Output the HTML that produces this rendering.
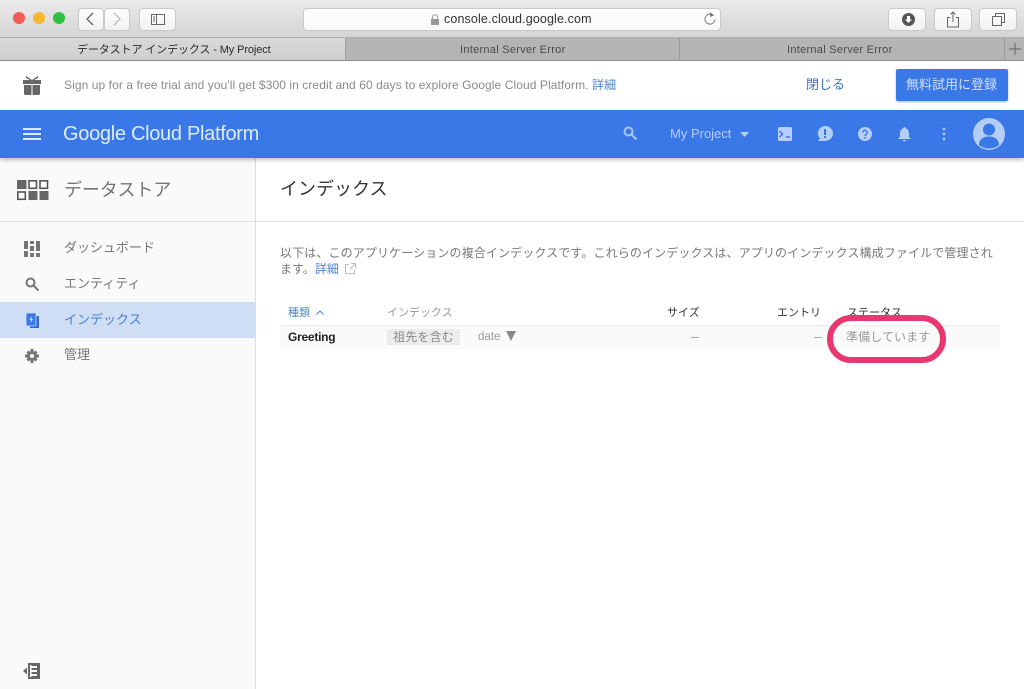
<!DOCTYPE html>
<html lang="ja"><head><meta charset="utf-8"><style>
html,body{margin:0;padding:0;width:1024px;height:689px;overflow:hidden;background:#fff}
body{position:relative;font-family:"Liberation Sans","Noto Sans CJK JP",sans-serif;font-size:12px;color:#666}
.a{position:absolute}
.t{position:absolute;white-space:nowrap;line-height:16px}
svg{position:absolute;overflow:visible}
.btn{position:absolute;background:linear-gradient(#fdfdfd,#f1f1f1);border:1px solid #c9c9c9;border-radius:4px;box-sizing:border-box;height:23px;top:8px}
</style></head><body>
<div class="a" style="left:0;top:0;width:1024px;height:38px;background:linear-gradient(#ebebeb,#d4d4d4);border-bottom:1px solid #b0b0b0;box-sizing:border-box"></div>
<div class="a" style="left:13px;top:12px;width:12px;height:12px;border-radius:50%;background:#f25a52"></div>
<div class="a" style="left:33px;top:12px;width:12px;height:12px;border-radius:50%;background:#f6b82e"></div>
<div class="a" style="left:53px;top:12px;width:12px;height:12px;border-radius:50%;background:#2fc03f"></div>
<div class="btn" style="left:78px;width:26px"></div>
<div class="btn" style="left:104px;width:26px"></div>
<svg style="left:0;top:0" width="200" height="38" fill="none"><path d="M93 13l-6 6 6 6" stroke="#666" stroke-width="1.3"/><path d="M114 13l6 6-6 6" stroke="#bbb" stroke-width="1.3"/></svg>
<div class="btn" style="left:139px;width:37px"></div>
<svg style="left:151px;top:14px" width="14" height="11" fill="none"><rect x=".5" y=".5" width="13" height="10" stroke="#666"/><path d="M5.500 0v11M2 3h2M2 5h2M2 7h2" stroke="#666"/></svg>
<div class="btn" style="left:303px;width:418px;background:linear-gradient(#fff,#f8f8f8)"></div>
<svg style="left:430px;top:14px" width="10" height="11"><path d="M2.500 5V3.200a2.500 2.500 0 0 1 5 0V5" fill="none" stroke="#999"/><rect x="1" y="5" width="8" height="6" fill="#999"/></svg>
<div class="t" style="left:444px;top:11px;font-size:12.500px;color:#333;letter-spacing:.13px">console.cloud.google.com</div>
<svg style="left:703px;top:12px" width="14" height="15" fill="none"><path d="M10.500 3.500a5 5 0 1 0 1.500 4" stroke="#777" stroke-width="1"/><path d="M7 0l4 3.500-4 1.500z" fill="#777"/></svg>
<div class="btn" style="left:888px;width:38px"></div>
<div class="btn" style="left:934px;width:38px"></div>
<div class="btn" style="left:979px;width:38px"></div>
<svg style="left:902px;top:13px" width="13" height="13"><circle cx="6.500" cy="6.500" r="6.500" fill="#555"/><path d="M5 3h3v3.500h2L6.500 10 3 6.500h2z" fill="#fff"/></svg>
<svg style="left:946px;top:11px" width="14" height="17" fill="none" stroke="#666"><path d="M4 6.500H1.500v9.500h11V6.500H10M7 11V1M4.500 3.500L7 1l2.500 2.500"/></svg>
<svg style="left:992px;top:13px" width="13" height="13" fill="none" stroke="#666"><rect x=".5" y="3.500" width="9" height="9"/><path d="M3.500 3.500V.5h9v9H9.500"/></svg>

<div class="a" style="left:0;top:38px;width:1024px;height:23px;background:#b4b4b4;border-bottom:1px solid #8f8f8f;box-sizing:border-box"></div>
<div class="a" style="left:0;top:38px;width:346px;height:22px;background:linear-gradient(#d9d9d9,#cfcfcf);border-right:1px solid #a0a0a0;box-sizing:border-box"></div>
<div class="a" style="left:679px;top:38px;width:1px;height:22px;background:#9c9c9c"></div>
<div class="a" style="left:1004px;top:38px;width:1px;height:22px;background:#9c9c9c"></div>
<div class="t" style="left:77px;top:42px;font-size:11px;color:#2a2a2a;letter-spacing:-.11px">データストア インデックス - My Project</div>
<div class="t" style="left:460px;top:42px;font-size:11px;color:#4a4a4a;letter-spacing:.28px">Internal Server Error</div>
<div class="t" style="left:787px;top:42px;font-size:11px;color:#4a4a4a;letter-spacing:.28px">Internal Server Error</div>
<svg style="left:1009px;top:43px" width="12" height="12" fill="none" stroke="#666"><path d="M6 0v12M0 6h12"/></svg>

<svg style="left:23px;top:76px" width="18" height="20" fill="#666"><path d="M0 4h18v4H0zM1 9h7.500v10H2.500Q1 19 1 17.500zM9.500 9H17v8.500Q17 19 15.500 19H9.500z"/><path d="M3 0l6 4 6-4v2l-4 2H7L3 2z"/></svg>
<div class="t" style="left:64px;top:77px;color:#8a8a8a;font-size:12px;letter-spacing:.08px">Sign up for a free trial and you'll get $300 in credit and 60 days to explore Google Cloud Platform. <span style="color:#4d86c9">詳細</span></div>
<div class="t" style="left:806px;top:77px;font-size:13px;color:#3f74bd">閉じる</div>
<div class="a" style="left:896px;top:69px;width:112px;height:32px;background:#3b78e7;border-radius:2px;box-shadow:0 1px 2px rgba(0,0,0,.3)"></div>
<div class="t" style="left:906px;top:77px;font-size:13px;color:#d3e2fb">無料試用に登録</div>

<div class="a" style="left:0;top:158px;width:256px;height:531px;background:#fafafa;border-right:1px solid #dcdcdc;box-sizing:border-box"></div>
<div class="a" style="left:0;top:221px;width:1024px;height:1px;background:#dedede"></div>
<div class="a" style="left:0;top:302px;width:255px;height:36px;background:#d0def5"></div>
<div class="a" style="left:0;top:110px;width:1024px;height:48px;background:#3b78e7;box-shadow:0 2px 4px rgba(0,0,0,.25)"></div>
<svg style="left:23px;top:128px" width="18" height="12" fill="#dceafd"><path d="M0 0h18v2H0zM0 5h18v2H0zM0 10h18v2H0z"/></svg>
<div class="t" style="left:63px;top:122px;font-size:20px;line-height:24px;color:#dcecfd;letter-spacing:-.3px">Google Cloud Platform</div>
<svg style="left:623px;top:126px" width="15" height="15" fill="none" stroke="#a9c6f5" stroke-width="2"><circle cx="5.500" cy="5.500" r="4"/><path d="M8.500 8.500l5 5"/></svg>
<div class="t" style="left:670px;top:126px;font-size:13px;color:#b4cef7">My Project</div>
<svg style="left:740px;top:132px" width="10" height="5" fill="#b4cef7"><path d="M0 0h9L4.500 5z"/></svg>
<svg style="left:778px;top:127px" width="14" height="14"><rect width="14" height="14" rx="1.500" fill="#b4cef7"/><path d="M1.500 4l3 3-3 3M8 10h4" fill="none" stroke="#3b78e7" stroke-width="1.500"/></svg>
<svg style="left:817px;top:126px" width="16" height="16"><path d="M8 0a8 7.500 0 0 1 0 15H1l2-2.500A8 7.500 0 0 1 8 0z" fill="#b4cef7"/><path d="M7 3h2v6H7zM7 10h2v2H7z" fill="#3b78e7"/></svg>
<svg style="left:858px;top:127px" width="14" height="14"><circle cx="7" cy="7" r="7" fill="#b4cef7"/><path d="M4.800 5.500a2.200 2.200 0 1 1 3.500 1.800C7.500 7.900 7 8.200 7 9" fill="none" stroke="#3b78e7" stroke-width="1.400"/><rect x="6.200" y="10" width="1.600" height="1.600" fill="#3b78e7"/></svg>
<svg style="left:898px;top:127px" width="13" height="15" fill="#b4cef7"><path d="M6.500 0a1 1 0 0 1 1 1.200C10 1.800 11 4 11 6.500V10l2 2H0l2-2V6.500C2 4 3 1.800 5.500 1.200a1 1 0 0 1 1-1.200zM5 13h3a1.500 1.500 0 0 1-3 0z"/></svg>
<svg style="left:942px;top:127px" width="4" height="14" fill="#a9c6f5"><circle cx="2" cy="2" r="1.400"/><circle cx="2" cy="7" r="1.400"/><circle cx="2" cy="12" r="1.400"/></svg>
<svg style="left:973px;top:118px" width="32" height="32"><circle cx="16" cy="16" r="16" fill="#b4cef7"/><circle cx="16" cy="11.500" r="6" fill="#3b78e7"/><path d="M6 27c0-6 5-8.500 10-8.500s10 2.500 10 8.500a16 16 0 0 1-20 0z" fill="#3b78e7"/></svg>

<svg style="left:17px;top:180px" width="31" height="20"><rect width="9.500" height="9" fill="#666"/><rect x="12" y=".8" width="7.500" height="7.500" fill="#fff" stroke="#555" stroke-width="1.600"/><rect x="23" y=".8" width="7.500" height="7.500" fill="#fff" stroke="#555" stroke-width="1.600"/><rect x=".8" y="12" width="7.500" height="7.300" fill="#fff" stroke="#555" stroke-width="1.600"/><rect x="11.500" y="11" width="9" height="9" fill="#666"/><rect x="22.500" y="11" width="9" height="9" fill="#666"/></svg>
<div class="t" style="left:64px;top:179px;font-size:18px;line-height:22px;color:#757575;letter-spacing:-.15px">データストア</div>
<div class="t" style="left:280px;top:178px;font-size:18px;line-height:22px;color:#333">インデックス</div>

<svg style="left:24px;top:241px" width="16" height="16" fill="#757575"><path d="M0 0h4v8H0zM0 10h4v6H0zM6 0h4v3H6zM6 5h4v5H6zM6 12h4v4H6zM12 0h4v10h-4zM12 12h4v4h-4z"/></svg>
<div class="t" style="left:64px;top:240px;font-size:13px;color:#777">ダッシュボード</div>
<svg style="left:25px;top:277px" width="14" height="14" fill="none" stroke="#757575" stroke-width="2"><circle cx="5.500" cy="5.500" r="4"/><path d="M8.500 8.500l5 5"/></svg>
<div class="t" style="left:64px;top:276px;font-size:13px;color:#777">エンティティ</div>
<svg style="left:26px;top:313px" width="13" height="15"><path d="M3 3h10v12H4z" fill="#2f6bd0"/><path d="M1.500 0H10v11.500Q10 13 8.500 13H1.500Q0 13 0 11.500V1.500Q0 0 1.500 0z" fill="#3b78e7" stroke="#d0def5" stroke-width=".8"/><path d="M5.500 3L3.500 7H5L4.500 10 7 6H5.500z" fill="#d0def5"/></svg>
<div class="t" style="left:64px;top:312px;font-size:13px;color:#4a7fd0">インデックス</div>
<svg style="left:25px;top:349px" width="14" height="14" fill="#757575"><circle cx="7" cy="7" r="5"/><path d="M5.500 0h3v14h-3zM0 5.500h14v3H0zM1.500 3.500l2-2 9 9-2 2zM10.500 1.500l2 2-9 9-2-2z"/><circle cx="7" cy="7" r="2" fill="#fafafa"/></svg>
<div class="t" style="left:64px;top:347px;font-size:13px;color:#777">管理</div>
<svg style="left:23px;top:663px" width="17" height="16" fill="#666"><path d="M5 0h12v16H5zM0 8l4-3.500v7z"/><path d="M8 3h6v2H8zM8 7h6v2H8zM8 11h6v2H8z" fill="#fafafa"/><path d="M7 2h1.500v12H7z" fill="#fafafa"/></svg>

<div class="t" style="left:280px;top:245px;font-size:12px;line-height:16px;color:#787878;letter-spacing:.125px">以下は、このアプリケーションの複合インデックスです。これらのインデックスは、アプリのインデックス構成ファイルで管理され</div>
<div class="t" style="left:280px;top:261px;font-size:12px;color:#787878">ます。<span style="color:#4d86c9">詳細</span></div>
<svg style="left:345px;top:263px" width="11" height="11" fill="none" stroke="#aaa" stroke-width=".8"><path d="M4 1.500H.5v9h9V7M6 .5h4.500V5M10.500 .5L5 6"/></svg>

<div class="t" style="left:288px;top:305px;font-size:11px;color:#4d86c9">種類</div>
<svg style="left:316px;top:310px" width="8" height="5" fill="none" stroke="#4d86c9"><path d="M.5 4.500L4 1l3.500 3.500"/></svg>
<div class="t" style="left:387px;top:305px;font-size:11px;color:#9a9a9a">インデックス</div>
<div class="t" style="left:667px;top:305px;font-size:11px;color:#333">サイズ</div>
<div class="t" style="left:777px;top:305px;font-size:11px;color:#333">エントリ</div>
<div class="t" style="left:847px;top:305px;font-size:11px;color:#333">ステータス</div>
<div class="a" style="left:280px;top:325px;width:720px;height:24px;background:#fafafa;border-top:1px solid #ebebeb;box-sizing:border-box"></div>
<div class="t" style="left:288px;top:329px;font-size:12px;font-weight:bold;color:#222;letter-spacing:-.25px">Greeting</div>
<div class="a" style="left:387px;top:329px;width:73px;height:16px;background:#ececec"></div>
<div class="t" style="left:393px;top:329px;font-size:12px;color:#888;letter-spacing:.2px">祖先を含む</div>
<div class="t" style="left:478px;top:329px;font-size:11.500px;color:#9a9a9a">date</div>
<svg style="left:506px;top:331px" width="10" height="10" fill="#8a8a8a"><path d="M0 0h10L5 10z"/></svg>
<div class="a" style="left:691px;top:337px;width:8px;height:1px;background:#aaa"></div>
<div class="a" style="left:814px;top:337px;width:8px;height:1px;background:#aaa"></div>
<div class="a" style="left:827px;top:315px;width:119px;height:48px;box-sizing:border-box;border:6px solid #e8386f;border-radius:24px"></div>
<div class="t" style="left:846px;top:329px;font-size:12px;color:#999;letter-spacing:.1px">準備しています</div>
</body></html>
